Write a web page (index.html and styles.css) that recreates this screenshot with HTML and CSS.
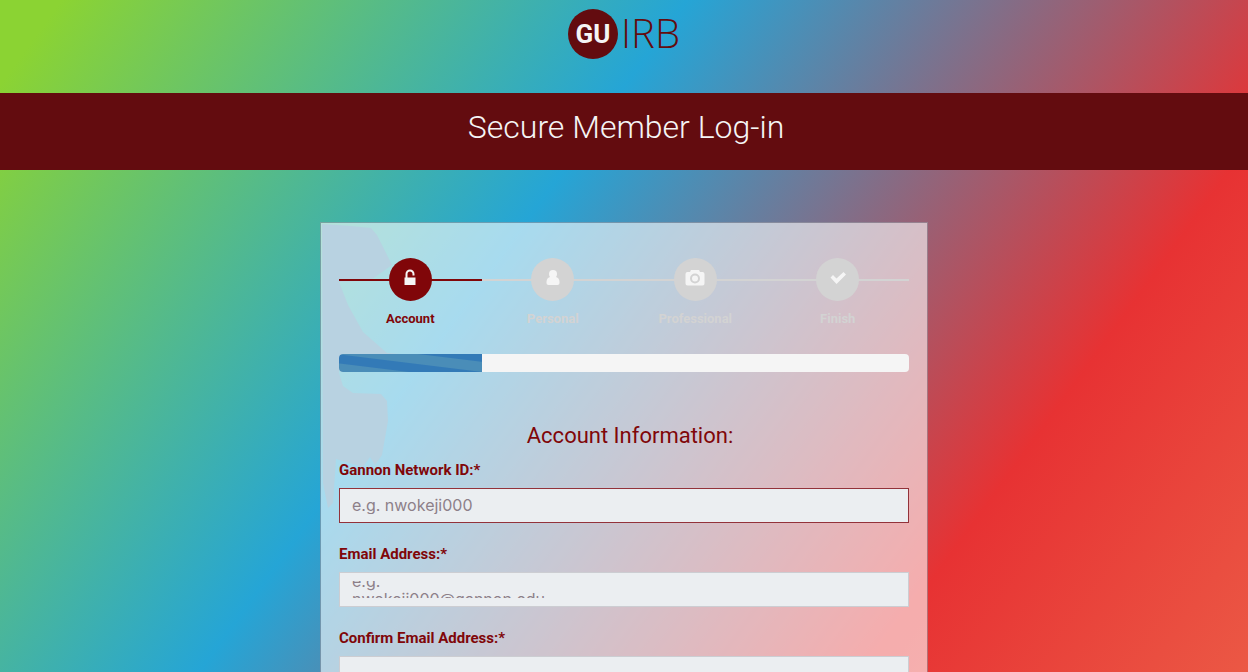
FILE: index.html
```html
<!DOCTYPE html>
<html lang="en">
<head>
<meta charset="utf-8">
<meta name="viewport" content="width=device-width, initial-scale=1">
<title>GU IRB - Secure Member Log-in</title>
<link rel="stylesheet" href="styles.css">
</head>
<body>
<header class="site-header">
  <a class="logo" href="#"><span class="logo-mark">GU</span><span class="logo-name">IRB</span></a>
</header>
<div class="banner"><h1 class="banner-title">Secure Member Log-in</h1></div>
<main class="main">
  <form class="panel">
    <svg class="panel-art" width="110" height="300" viewBox="0 0 110 300" aria-hidden="true">
      <path d="M1 1 L30 3 50 5 56 12 71 42 50 57 18 59 27 82 42 109 66 130 90 132 18 134 18 150 22 163 32 170 60 171 66 178 67 198 61 232 54 242 49 234 42 244 15 236 12 280 7 285 2 260Z"/>
    </svg>
    <ol class="steps">
      <li class="step step-active">
        <span class="step-dot"><svg width="18" height="18" viewBox="0 0 18 18" aria-hidden="true"><path class="stroke" d="M5.500 9V5a3.500 3.500 0 0 1 7 0V6.500"/><path d="M3.500 8.500h11v7.500h-11z"/></svg></span>
        <span class="step-name">Account</span>
      </li>
      <li class="step">
        <span class="step-dot"><svg width="18" height="18" viewBox="0 0 18 18" aria-hidden="true"><circle cx="9" cy="5" r="4"/><path d="M6 8h6q3.500 1 3.500 5v1q0 2-2 2H4.500q-2 0-2-2v-1q0-4 3.500-5z"/></svg></span>
        <span class="step-name">Personal</span>
      </li>
      <li class="step">
        <span class="step-dot"><svg width="20" height="18" viewBox="0 0 20 18" aria-hidden="true"><path d="M2.500 3H5l1-2h8l1 2h2.500q2 0 2 2v9.500q0 2-2 2h-15q-2 0-2-2V5q0-2 2-2z"/><circle class="lens" cx="10" cy="9.500" r="4"/></svg></span>
        <span class="step-name">Professional</span>
      </li>
      <li class="step">
        <span class="step-dot"><svg width="18" height="18" viewBox="0 0 18 18" aria-hidden="true"><path d="M1.500 8.500 4 6l3.500 3.500L14.500 3 17 5.500 7.500 15z"/></svg></span>
        <span class="step-name">Finish</span>
      </li>
    </ol>
    <div class="progress" role="progressbar" aria-label="Step 1 of 4" aria-valuenow="25" aria-valuemin="0" aria-valuemax="100"><div class="progress-bar" style="width:25%"></div></div>
    <h2 class="section-title">Account Information:</h2>
    <div class="field">
      <label class="field-label" for="network-id">Gannon Network ID:*</label>
      <div class="box box-focus"><input class="control" id="network-id" type="text" placeholder="e.g. nwokeji000"></div>
    </div>
    <div class="field">
      <label class="field-label" for="email">Email Address:*</label>
      <div class="box"><div class="clip"><textarea class="control control-tall" id="email" rows="2" placeholder="e.g.&#10;nwokeji000@gannon.edu"></textarea></div></div>
    </div>
    <div class="field">
      <label class="field-label" for="confirm-email">Confirm Email Address:*</label>
      <div class="box"><input class="control" id="confirm-email" type="email"></div>
    </div>
  </form>
</main>
</body>
</html>
```
FILE: styles.css
```css
* {
  box-sizing: border-box;
}

html {
  height: 100%;
  overflow: hidden;
}

body {
  margin: 0;
  height: 100%;
  overflow: hidden;
  font-family: Roboto, "Open Sans", sans-serif;
  color: #800609;
  background: linear-gradient(126deg, #8bd333 50px, #25a5d6 556px, #e73233 1095px, #ed6a4d 1550px) no-repeat;
}

.site-header {
  display: flex;
  justify-content: center;
  padding: 9px 0 34px;
}

.logo {
  display: flex;
  align-items: center;
  gap: 3px;
  height: 50px;
  color: #630c0f;
  text-decoration: none;
}

.logo-mark {
  display: grid;
  place-items: center;
  width: 50px;
  height: 50px;
  border-radius: 50%;
  background: #630c0f;
  color: #f5f5f5;
  font-size: 26px;
  line-height: 50px;
  font-weight: 700;
}

.logo-name {
  padding-bottom: 2px;
  font-family: "Open Sans", sans-serif;
  font-size: 40px;
  line-height: 48px;
  font-weight: 300;
}

.banner {
  padding: 14px 16px 23px;
  background: #630c0f;
  text-align: center;
}

.banner-title {
  margin: 0;
  padding-left: 4px;
  font-size: 32px;
  line-height: 40px;
  font-weight: 300;
  color: #f5f5f5;
}

.main {
  display: flex;
  justify-content: center;
  padding: 52px 16px 0;
}

.panel {
  position: relative;
  width: 100%;
  max-width: 608px;
  padding: 35px 18px 40px;
  border: 1px solid rgba(150, 150, 160, 0.6);
  background: rgba(255, 255, 255, 0.6);
  background-clip: padding-box;
}

.panel-art {
  position: absolute;
  top: 0;
  left: 0;
  z-index: -1;
  fill: #4e90b3;
}

.steps {
  display: grid;
  grid-template-columns: repeat(4, 1fr);
  margin: 0;
  padding: 0;
  list-style: none;
}

.step {
  display: flex;
  flex-direction: column;
  align-items: center;
  gap: 9px;
  color: #d3d3d3;
  background: linear-gradient(currentColor, currentColor) 0 21px / 100% 2px no-repeat;
}

.step-active {
  color: #800609;
}

.step-dot {
  display: grid;
  place-items: center;
  width: 43px;
  height: 43px;
  padding-bottom: 3px;
  border-radius: 50%;
  background: currentColor;
}

.step-dot svg {
  fill: #f5f5f5;
}

.step-dot .stroke {
  fill: none;
  stroke: #f5f5f5;
  stroke-width: 2;
}

.step-dot .lens {
  fill: none;
  stroke: #d3d3d3;
  stroke-width: 2;
}

.step-name {
  font-size: 13px;
  line-height: 18px;
  font-weight: 700;
}

.progress {
  height: 18px;
  margin-top: 26px;
  border-radius: 4px;
  overflow: hidden;
  background: #f5f5f5;
}

.progress-bar {
  height: 100%;
  background: linear-gradient(7deg, #4a8db8 8px, #337ab7 9px 17px, #4a8db8 18px 27px, #337ab7 28px);
}

.section-title {
  margin: 50px 0 0;
  padding-left: 12px;
  font-size: 22px;
  line-height: 28px;
  font-weight: 400;
  text-align: center;
}

.field {
  margin-bottom: 21px;
}

.section-title + .field {
  margin-top: 10px;
}

.field-label {
  display: block;
  margin-bottom: 8px;
  font-size: 15px;
  line-height: 20px;
  font-weight: 700;
}

.box {
  height: 35px;
  padding: 8px 12px;
  border: 1px solid #cccdd2;
  background: #ebeef1;
}

.box-focus {
  border-color: #93323a;
}

.clip {
  display: flex;
  align-items: center;
  height: 17px;
  overflow: hidden;
}

.control {
  display: block;
  width: 100%;
  height: 17px;
  padding: 0;
  border: 0;
  outline: 0;
  background: transparent;
  color: #2c3e50;
  font: 16px/17px Inter, sans-serif;
}

.control::placeholder {
  color: #8d8089;
  opacity: 1;
}

.control-tall {
  flex-shrink: 0;
  height: 36px;
  line-height: 18px;
  resize: none;
  overflow: hidden;
}
```
